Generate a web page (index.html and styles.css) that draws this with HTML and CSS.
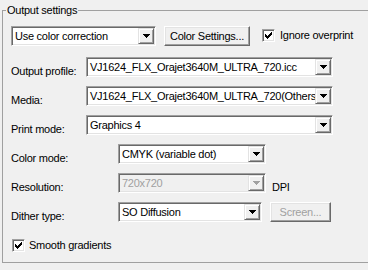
FILE: index.html
```html
<!DOCTYPE html>
<html>
<head>
<meta charset="utf-8">
<link rel="stylesheet" href="styles.css">
</head>
<body>
<fieldset class="group">
  <legend class="group-title">Output settings</legend>

  <div class="row">
    <div class="combo combo-corr">
      <span class="combo-text">Use color correction</span>
      <span class="combo-btn"><svg class="arrow" width="7" height="4" viewBox="0 0 7 4"><path d="M0 0h7v1h-1v1h-1v1h-1v1h-1v-1h-1v-1h-1v-1h-1z"/></svg></span>
    </div>
    <button class="btn btn-color">Color Settings...</button>
    <div class="check check-ignore">
      <span class="box"><svg class="tick" width="7" height="7" viewBox="0 0 7 7"><path d="M0 2h1v3h-1zM1 3h1v3h-1zM2 4h1v3h-1zM3 3h1v3h-1zM4 2h1v3h-1zM5 1h1v3h-1zM6 0h1v3h-1z"/></svg></span>
      <span class="check-text">Ignore overprint</span>
    </div>
  </div>

  <div class="row row-field row-first">
    <span class="label label-a">Output profile:</span>
    <div class="combo combo-long">
      <span class="combo-text">VJ1624_FLX_Orajet3640M_ULTRA_720.icc</span>
      <span class="combo-btn"><svg class="arrow" width="7" height="4" viewBox="0 0 7 4"><path d="M0 0h7v1h-1v1h-1v1h-1v1h-1v-1h-1v-1h-1v-1h-1z"/></svg></span>
    </div>
  </div>

  <div class="row row-field">
    <span class="label label-a">Media:</span>
    <div class="combo combo-long">
      <span class="combo-text">VJ1624_FLX_Orajet3640M_ULTRA_720(Others)</span>
      <span class="combo-btn"><svg class="arrow" width="7" height="4" viewBox="0 0 7 4"><path d="M0 0h7v1h-1v1h-1v1h-1v1h-1v-1h-1v-1h-1v-1h-1z"/></svg></span>
    </div>
  </div>

  <div class="row row-field">
    <span class="label label-a">Print mode:</span>
    <div class="combo combo-long">
      <span class="combo-text">Graphics 4</span>
      <span class="combo-btn"><svg class="arrow" width="7" height="4" viewBox="0 0 7 4"><path d="M0 0h7v1h-1v1h-1v1h-1v1h-1v-1h-1v-1h-1v-1h-1z"/></svg></span>
    </div>
  </div>

  <div class="row row-field">
    <span class="label label-b">Color mode:</span>
    <div class="combo combo-mid">
      <span class="combo-text">CMYK (variable dot)</span>
      <span class="combo-btn"><svg class="arrow" width="7" height="4" viewBox="0 0 7 4"><path d="M0 0h7v1h-1v1h-1v1h-1v1h-1v-1h-1v-1h-1v-1h-1z"/></svg></span>
    </div>
  </div>

  <div class="row row-field">
    <span class="label label-b">Resolution:</span>
    <div class="combo combo-mid combo-disabled">
      <span class="combo-text">720x720</span>
      <span class="combo-btn"><svg class="arrow" width="7" height="4" viewBox="0 0 7 4"><path d="M0 0h7v1h-1v1h-1v1h-1v1h-1v-1h-1v-1h-1v-1h-1z"/></svg></span>
    </div>
    <span class="label label-dpi">DPI</span>
  </div>

  <div class="row row-field">
    <span class="label label-b">Dither type:</span>
    <div class="combo combo-dither">
      <span class="combo-text">SO Diffusion</span>
      <span class="combo-btn"><svg class="arrow" width="7" height="4" viewBox="0 0 7 4"><path d="M0 0h7v1h-1v1h-1v1h-1v1h-1v-1h-1v-1h-1v-1h-1z"/></svg></span>
    </div>
    <button class="btn btn-screen" disabled>Screen...</button>
  </div>

  <div class="row row-smooth">
    <div class="check check-smooth">
      <span class="box"><svg class="tick" width="7" height="7" viewBox="0 0 7 7"><path d="M0 2h1v3h-1zM1 3h1v3h-1zM2 4h1v3h-1zM3 3h1v3h-1zM4 2h1v3h-1zM5 1h1v3h-1zM6 0h1v3h-1z"/></svg></span>
      <span class="check-text">Smooth gradients</span>
    </div>
  </div>
</fieldset>
</body>
</html>
```

FILE: styles.css
```css
* { box-sizing: border-box; }

html, body { margin: 0; padding: 0; }

body {
  width: 368px;
  height: 270px;
  overflow: hidden;
  background: #f0f0f0;
  color: #000;
  font-family: "Liberation Sans", Arial, sans-serif;
  font-size: 11px;
  letter-spacing: -0.25px;
}

.group {
  margin: 4px 0 0 2px;
  padding: 9px 0 10px 8px;
  border: 1px solid #a0a0a0;
  border-right: none;
  min-width: 0;
}

.group-title {
  margin-left: -5px;
  padding: 0 1px;
  line-height: 13px;
}

.row {
  display: flex;
  align-items: flex-start;
  height: 20px;
}

.row-field { margin-top: 9px; }
.row-first { margin-top: 11px; }
.row-smooth { margin-top: 17px; height: 13px; }

.label {
  flex: none;
  padding-top: 8px;
  line-height: 13px;
  white-space: nowrap;
}
.label-a { width: 75px; }
.label-b { width: 107px; }
.label-dpi { margin-left: 6px; }

.combo {
  flex: none;
  display: flex;
  height: 20px;
  padding: 1px;
  background: #fff;
  border: 1px solid;
  border-color: #a0a0a0 #fff #fff #a0a0a0;
  box-shadow: inset 1px 1px #696969, inset -1px -1px #e3e3e3;
}
.combo-corr { width: 145px; }
.combo-long { width: 247px; }
.combo-mid { width: 148px; }
.combo-dither { width: 144px; }

.combo-text {
  flex: 1;
  min-width: 0;
  overflow: hidden;
  white-space: nowrap;
  padding: 1px 0 0 2px;
  line-height: 15px;
}

.combo-btn {
  flex: none;
  width: 16px;
  height: 16px;
  display: flex;
  align-items: center;
  justify-content: center;
  background: #f0f0f0;
  border: 1px solid;
  border-color: #e3e3e3 #696969 #696969 #e3e3e3;
  box-shadow: inset 1px 1px #fff, inset -1px -1px #a0a0a0;
}

.arrow { display: block; fill: #000; shape-rendering: crispEdges; }

.combo-disabled { background: #f0f0f0; }
.combo-disabled .combo-text { color: #a0a0a0; }
.combo-disabled .arrow { fill: #a0a0a0; }

.btn {
  flex: none;
  height: 20px;
  padding: 0;
  font: inherit;
  letter-spacing: inherit;
  line-height: 16px;
  color: #000;
  background: #f0f0f0;
  border: 1px solid;
  border-color: #fff #696969 #696969 #fff;
  box-shadow: inset -1px -1px #a0a0a0, inset 1px 1px #e3e3e3;
}
.btn-color { width: 86px; margin-left: 8px; }
.btn-screen { width: 61px; margin-left: 8px; color: #a0a0a0; }

.check {
  display: flex;
  align-items: flex-start;
  gap: 5px;
}
.check-ignore { margin-left: 12px; margin-top: 3px; }
.check-smooth { margin-left: 1px; gap: 4px; }

.box {
  flex: none;
  width: 13px;
  height: 13px;
  padding: 2px;
  background: #fff;
  border: 1px solid;
  border-color: #a0a0a0 #fff #fff #a0a0a0;
  box-shadow: inset 1px 1px #696969, inset -1px -1px #e3e3e3;
}

.tick { display: block; fill: #000; shape-rendering: crispEdges; }

.check-text {
  line-height: 13px;
  white-space: nowrap;
}
```
